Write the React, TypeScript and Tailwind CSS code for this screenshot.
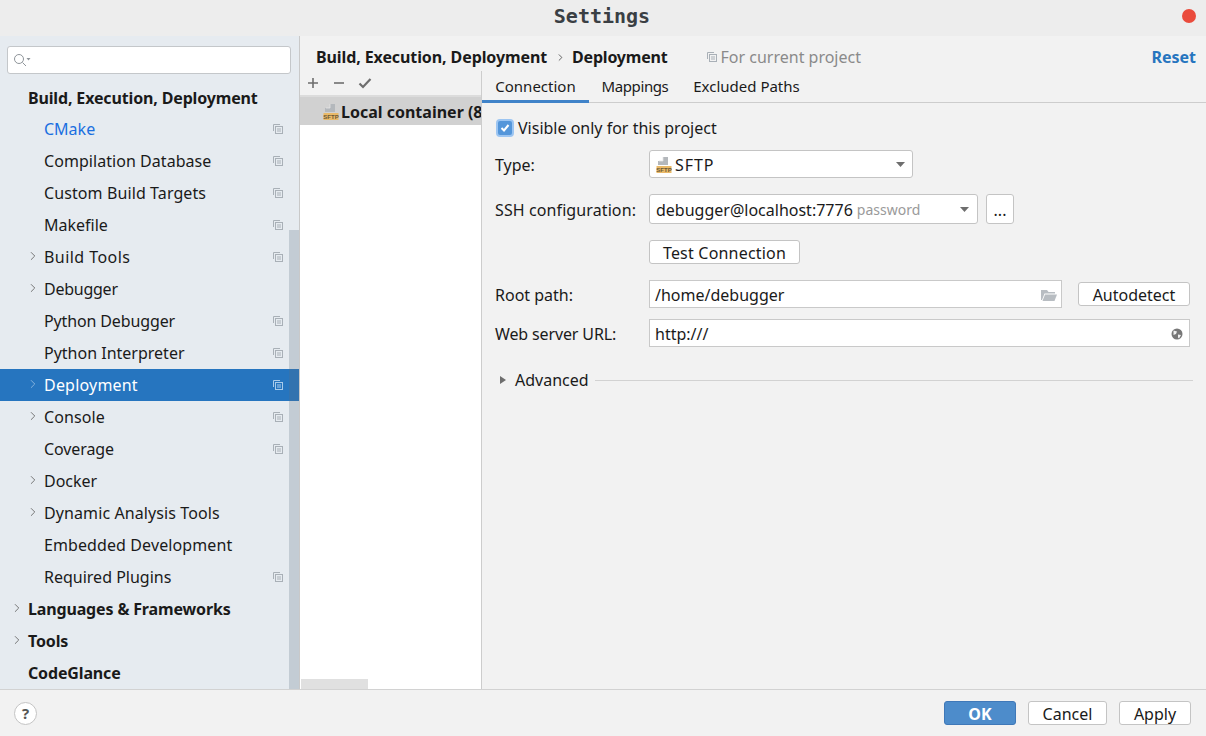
import type { ReactNode } from 'react';
import { ChevronRight } from 'lucide-react';

const SftpIcon = () => (
  <svg width="16" height="16" viewBox="0 0 16 16" className="shrink-0">
    <path d="M7 0h5v8H2V4h5z" fill="#b4b8bc" />
    <path d="M7 0v4H3" fill="none" stroke="#e4e4e4" strokeWidth="0.8" />
    <rect x="0.5" y="9" width="15" height="7" fill="#e9b968" />
    <text x="8" y="14.8" textAnchor="middle" fontSize="6" fontFamily="Liberation Sans, sans-serif" fontWeight="700" fill="#6a5836">SFTP</text>
  </svg>
);

const ProjectIcon = ({ color = '#a9b0b7' }: { color?: string }) => (
  <svg width="10" height="10" viewBox="0 0 10 10" fill="none" stroke={color} strokeWidth="1" className="shrink-0">
    <path d="M0.5 7V0.5H7" />
    <rect x="2.5" y="2.5" width="7" height="7" />
    <path d="M4 5h4M4 7h4" />
  </svg>
);

const Caret = () => (
  <svg width="9" height="5" viewBox="0 0 9 5" className="shrink-0">
    <path d="M0 0h9L4.5 5z" fill="#6e6e6e" />
  </svg>
);

type Row = { label: string; level: 0 | 1; arrow?: boolean; project?: boolean; active?: boolean; link?: boolean; cls?: string };

const rows: Row[] = [
  { label: 'Build, Execution, Deployment', level: 0, cls: 'h-[31px]' },
  { label: 'CMake', level: 1, project: true, link: true },
  { label: 'Compilation Database', level: 1, project: true, cls: 'tracking-[0.05px]' },
  { label: 'Custom Build Targets', level: 1, project: true, cls: 'tracking-[0.1px]' },
  { label: 'Makefile', level: 1, project: true },
  { label: 'Build Tools', level: 1, arrow: true, project: true, cls: 'tracking-[0.45px]' },
  { label: 'Debugger', level: 1, arrow: true, cls: 'tracking-[-0.25px]' },
  { label: 'Python Debugger', level: 1, project: true, cls: 'tracking-[-0.13px]' },
  { label: 'Python Interpreter', level: 1, project: true },
  { label: 'Deployment', level: 1, arrow: true, project: true, active: true, cls: 'tracking-[0.2px]' },
  { label: 'Console', level: 1, arrow: true, project: true, cls: 'tracking-[0.1px]' },
  { label: 'Coverage', level: 1, project: true, cls: 'tracking-[-0.1px]' },
  { label: 'Docker', level: 1, arrow: true },
  { label: 'Dynamic Analysis Tools', level: 1, arrow: true, cls: 'tracking-[0.1px]' },
  { label: 'Embedded Development', level: 1, cls: 'tracking-[0.1px]' },
  { label: 'Required Plugins', level: 1, project: true },
  { label: 'Languages & Frameworks', level: 0, arrow: true },
  { label: 'Tools', level: 0, arrow: true },
  { label: 'CodeGlance', level: 0 },
];

const SideRow = ({ row }: { row: Row }) => (
  <div className={`relative flex shrink-0 items-center pr-[16px] ${row.cls?.startsWith('h-') ? row.cls : 'h-[32px]'} ${row.level === 0 ? 'pl-[28px] font-bold tracking-[-0.15px]' : 'pl-[44px]'} ${row.active ? 'bg-[#2675bf] text-white' : row.link ? 'text-[#1a6fe0]' : 'text-[#1a1a1a]'}`}>
    {row.arrow && (
      <ChevronRight size={14} strokeWidth={1.5} className={`absolute top-[8px] ${row.level === 0 ? 'left-[10px]' : 'left-[26px]'} ${row.active ? 'text-[#8fb9e0]' : 'text-[#666]'}`} />
    )}
    <span className={`flex-1 whitespace-nowrap ${row.cls?.startsWith('tracking') ? row.cls : ''}`}>{row.label}</span>
    {row.project && <ProjectIcon color={row.active ? '#a8cbea' : '#a9b0b7'} />}
  </div>
);

const Btn = ({ children, className = '' }: { children: ReactNode; className?: string }) => (
  <div className={`flex items-center justify-center rounded-[3px] border border-[#c4c4c4] bg-white pt-[1px] text-[#1a1a1a] ${className}`}>{children}</div>
);

export default function App() {
  return (
    <div className="flex h-[736px] w-[1206px] flex-col overflow-hidden bg-[#f2f2f2] text-[16px] text-[#1a1a1a] font-['Noto_Sans',sans-serif]">
      {/* title bar */}
      <div className="relative flex h-[36px] shrink-0 items-center justify-center bg-[#ededed]">
        <span className="-mt-[4px] -ml-[2px] font-['DejaVu_Sans_Mono',monospace] text-[20px] font-bold text-[#3a3f44]">Settings</span>
        <span className="absolute right-[10px] top-[9px] h-[14px] w-[14px] rounded-full bg-[#ea4b3c]" />
      </div>

      <div className="flex min-h-0 flex-1">
        {/* sidebar */}
        <div className="relative flex w-[300px] shrink-0 flex-col overflow-hidden border-r border-[#c9c9c9] bg-[#e6ebf0]">
          <div className="flex h-[46px] shrink-0 items-start pl-[7px] pr-[8px] pt-[10px]">
            <div className="flex h-[28px] w-full items-center rounded-[3px] border border-[#c4c7ca] bg-white pl-[5px]">
              <svg width="18" height="14" viewBox="0 0 18 14" fill="none" stroke="#8f959a" strokeWidth="1">
                <circle cx="6" cy="6" r="4.5" />
                <path d="M9.5 9.5L13 13" />
                <path d="M13.5 5h4l-2 2.5z" fill="#8f959a" stroke="none" />
              </svg>
            </div>
          </div>
          {rows.map(r => <SideRow key={r.label} row={r} />)}
          <div className="absolute bottom-0 right-0 top-[194px] w-[10px] bg-[#5c6e80]/25" />
        </div>

        {/* content */}
        <div className="flex min-w-0 flex-1 flex-col">
          <div className="flex h-[35px] shrink-0 items-center pl-[16px] pr-[10px] pt-[7px]">
            <span className="font-bold tracking-[-0.1px]">Build, Execution, Deployment</span>
            <ChevronRight size={11} strokeWidth={1.6} className="ml-[8px] mr-[6px] text-[#333]" />
            <span className="font-bold tracking-[-0.2px]">Deployment</span>
            <span className="ml-[39px] mr-[4px]"><ProjectIcon color="#a9b0b7" /></span>
            <span className="text-[#8a8a8a]">For current project</span>
            <span className="ml-auto font-bold text-[#2675bf]">Reset</span>
          </div>

          <div className="flex min-h-0 flex-1">
            {/* deployment list */}
            <div className="relative flex w-[182px] shrink-0 flex-col overflow-hidden border-r border-[#cdcdcd]">
              <div className="flex h-[26px] shrink-0 items-center gap-[12px] border-b-2 border-[#dcdcdc] pl-[6px] text-[#6e6e6e]">
                <svg width="14" height="14" viewBox="0 0 14 14" stroke="#6e6e6e" strokeWidth="1.6"><path d="M7 2v10M2 7h10" /></svg>
                <svg width="14" height="14" viewBox="0 0 14 14" stroke="#6e6e6e" strokeWidth="1.6"><path d="M2 7h10" /></svg>
                <svg width="14" height="14" viewBox="0 0 14 14" fill="none" stroke="#6e6e6e" strokeWidth="2.2"><path d="M1.5 7.5l3.5 3.5 7.5-8" /></svg>
              </div>
              <div className="flex h-[28px] shrink-0 items-center gap-[2px] bg-[#d1d1d1] pl-[23px] pt-[1px] font-bold whitespace-nowrap">
                <SftpIcon />
                <span>Local container (8</span>
              </div>
              <div className="flex-1 bg-white" />
              <div className="absolute bottom-0 left-[1px] h-[10px] w-[67px] bg-[#e0e0e0]" />
            </div>

            {/* detail */}
            <div className="flex min-w-0 flex-1 flex-col">
              <div className="flex h-[32px] shrink-0 items-stretch border-b border-[#cdcdcd] text-[15px]">
                <div className="-mb-[1px] flex w-[107px] items-center justify-center border-b-[3px] border-[#4083c9] pt-[1px]">Connection</div>
                <div className="flex w-[92px] items-center justify-center tracking-[-0.4px]">Mappings</div>
                <div className="flex w-[131px] items-center justify-center">Excluded Paths</div>
              </div>

              <div className="flex flex-1 flex-col pl-[13px] pr-[13px]">
                <div className="mt-[13px] flex h-[24px] items-center gap-[4px] pl-[1px]">
                  <div className="flex h-[18px] w-[18px] items-center justify-center rounded-[4px] border-[2px] border-[#9cc5f2] bg-[#5496da]">
                    <svg width="12" height="12" viewBox="0 0 12 12" fill="none" stroke="white" strokeWidth="2"><path d="M2.5 6l2.5 2.5 4.5-5.5" /></svg>
                  </div>
                  <span>Visible only for this project</span>
                </div>

                <div className="mt-[10px] flex h-[28px] items-center">
                  <span className="w-[154px] shrink-0 pt-[1px]">Type:</span>
                  <Btn className="h-[28px] w-[264px] !justify-start gap-[2px] pl-[6px] pr-[7px]">
                    <SftpIcon />
                    <span className="flex-1 pl-[1px] tracking-[0.9px]">SFTP</span>
                    <Caret />
                  </Btn>
                </div>

                <div className="mt-[16px] flex h-[30px] items-center">
                  <span className="w-[154px] shrink-0 pt-[1px] tracking-[0.1px]">SSH configuration:</span>
                  <Btn className="h-[30px] w-[329px] !justify-start pl-[6px] pr-[8px]">
                    <span>debugger@localhost:7776</span>
                    <span className="ml-[4px] flex-1 text-[14px] text-[#9a9a9a]">password</span>
                    <Caret />
                  </Btn>
                  <Btn className="ml-[8px] h-[30px] w-[28px]">...</Btn>
                </div>

                <div className="mt-[16px] flex h-[24px]">
                  <Btn className="ml-[154px] h-[24px] w-[151px] tracking-[0.2px]">Test Connection</Btn>
                </div>

                <div className="mt-[16px] flex h-[28px] items-center">
                  <span className="w-[154px] shrink-0 pt-[1px]">Root path:</span>
                  <div className="flex h-[28px] w-[413px] items-center border border-[#c9c9c9] bg-white pl-[5px] pr-[4px] pt-[1px]">
                    <span className="flex-1">/home/debugger</span>
                    <svg width="16" height="12" viewBox="0 0 16 12" fill="#b8bdc2"><path d="M0 1h6l1.5 2H14v1.5H3.5L1 11H0z" /><path d="M4 5.5h12L13.5 12H1.5z" /></svg>
                  </div>
                  <Btn className="ml-[16px] h-[24px] w-[112px]">Autodetect</Btn>
                </div>

                <div className="mt-[11px] flex h-[28px] items-center">
                  <span className="w-[154px] shrink-0 pt-[1px] tracking-[-0.13px]">Web server URL:</span>
                  <div className="flex h-[28px] w-[541px] items-center border border-[#c9c9c9] bg-white pl-[5px] pr-[6px] pt-[1px]">
                    <span className="flex-1">http:///</span>
                    <svg width="12" height="12" viewBox="0 0 12 12">
                      <circle cx="6" cy="6" r="5.5" fill="#777" />
                      <path d="M2.5 2.5l3.5 1-1 2.5-2.5 1zM7 6.5l3 .5-2 3.5-1-1z" fill="#f0f0f0" />
                    </svg>
                  </div>
                </div>

                <div className="mt-[21px] flex h-[24px] items-center">
                  <svg width="6" height="8" viewBox="0 0 6 8" className="ml-[5px] mr-[9px] shrink-0"><path d="M0 0l6 4-6 4z" fill="#6e6e6e" /></svg>
                  <span>Advanced</span>
                  <div className="ml-[6px] h-[1px] w-[598px] shrink-0 bg-[#d2d2d2]" />
                </div>
              </div>
            </div>
          </div>
        </div>
      </div>

      {/* footer */}
      <div className="flex h-[47px] shrink-0 items-center border-t border-[#d2d2d2] bg-[#f2f2f2] pl-[14px] pr-[15px]">
        <div className="flex h-[23px] w-[23px] items-center justify-center rounded-full border border-[#c4c4c4] bg-white text-[15px] font-bold text-[#555]">?</div>
        <Btn className="ml-auto h-[24px] w-[72px] !border-[#3f78b8] !bg-[#4d8ccb] font-bold !text-white">OK</Btn>
        <Btn className="ml-[12px] h-[24px] w-[79px]">Cancel</Btn>
        <Btn className="ml-[12px] h-[24px] w-[72px]">Apply</Btn>
      </div>
    </div>
  );
}
